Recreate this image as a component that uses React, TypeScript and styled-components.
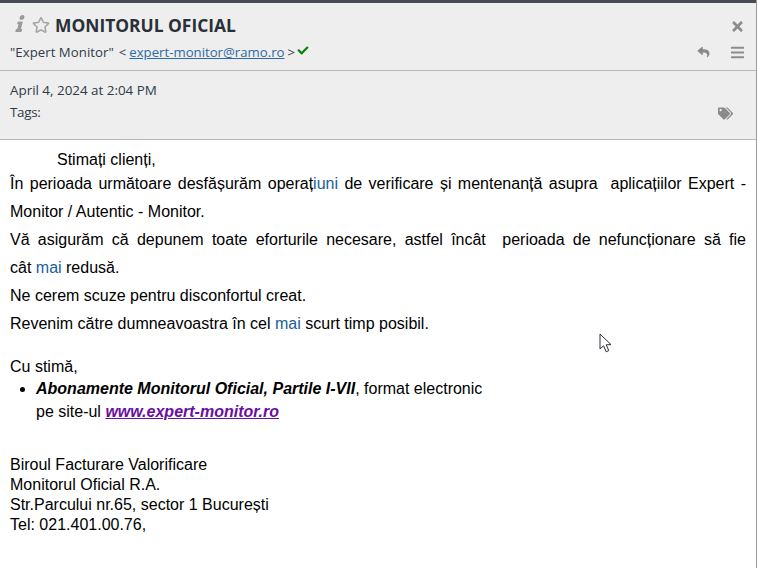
import styled, { createGlobalStyle } from 'styled-components'
import { FaCheck, FaInfo, FaRegStar, FaReply, FaTags, FaTimes, FaBars } from 'react-icons/fa'

const GlobalStyle = createGlobalStyle`
  html, body {
    margin: 0;
    padding: 0;
    background: #ffffff;
    overflow: hidden;
  }
`

function App() {
  return (
    <>
      <GlobalStyle />
      <Window>
        <TopStrip />
        <Header>
          <TitleRow>
            <InfoIcon />
            <StarIcon />
            <Title>MONITORUL OFICIAL</Title>
            <Spacer />
            <CloseIcon />
          </TitleRow>
          <SenderRow>
            <Sender>"Expert Monitor"</Sender>
            <OpenBracket>&lt;</OpenBracket>
            <SenderLink href="#">expert-monitor@ramo.ro</SenderLink>
            <CloseBracket>&gt;</CloseBracket>
            <CheckIcon />
            <Spacer />
            <ReplyIcon />
            <MenuIcon />
          </SenderRow>
        </Header>
        <Meta>
          <DateLine>April 4, 2024 at 2:04 PM</DateLine>
          <TagsRow>
            <TagsLabel>Tags:</TagsLabel>
            <TagIcon />
          </TagsRow>
        </Meta>
        <Body>
          <Greeting>Stimați clienți,</Greeting>
          <Para>
            În perioada următoare desfășurăm operaț<Blue>iuni</Blue> de verificare și mentenanță asupra&nbsp; aplicațiilor Expert - Monitor / Autentic - Monitor.
          </Para>
          <FullLine>Vă asigurăm că depunem toate eforturile necesare, astfel încât&nbsp; perioada de nefuncționare să fie</FullLine>
          <Para>
            cât <Blue>mai</Blue> redusă.
          </Para>
          <Para>Ne cerem scuze pentru disconfortul creat.</Para>
          <Para>
            Revenim către dumneavoastra în cel <Blue>mai</Blue> scurt timp posibil.
          </Para>
          <Closing>Cu stimă,</Closing>
          <Bullets>
            <li>
              <strong><em>Abonamente Monitorul Oficial, Partile I-VII</em></strong>, format electronic
              <br />
              pe site-ul <SiteLink href="#">www.expert-monitor.ro</SiteLink>
            </li>
          </Bullets>
          <Signature>
            <div>Biroul Facturare Valorificare</div>
            <div>Monitorul Oficial R.A.</div>
            <div>Str.Parcului nr.65, sector 1 București</div>
            <div>Tel: 021.401.00.76,</div>
          </Signature>
        </Body>
        <Cursor width="14" height="21" viewBox="0 0 14 21">
          <path d="M1 1 L1 16 L4.6 12.8 L7.2 18.8 L9.8 17.6 L7.2 11.8 L12 11.6 Z" fill="#ffffff" stroke="#2a2f38" strokeWidth="1" />
        </Cursor>
      </Window>
    </>
  )
}

const Window = styled.div`
  position: relative;
  width: 757px;
  height: 568px;
  box-sizing: border-box;
  border-right: 1px solid #9a9a9a;
  overflow: hidden;
  background: #fff;
`

const TopStrip = styled.div`
  height: 3px;
  background: #464b55;
`

const Header = styled.header`
  height: 68px;
  box-sizing: border-box;
  padding: 9px 11px 0 10px;
  background: #eeeeee;
  border-bottom: 1px solid #b8b8b8;
  font-family: "Open Sans", sans-serif;
`

const TitleRow = styled.div`
  display: flex;
  align-items: center;
  height: 27px;
`

const SenderRow = styled.div`
  display: flex;
  align-items: center;
  height: 22px;
  margin-top: 2px;
  font-size: 13.2px;
  color: #2f3b49;
`

const Spacer = styled.div`
  flex: 1;
`

const InfoIcon = styled(FaInfo)`
  width: 11px;
  height: 17px;
  margin-left: 5px;
  margin-top: -5px;
  color: #9b9b9b;
  transform: skewX(-14deg);
`

const StarIcon = styled(FaRegStar)`
  width: 18px;
  height: 18px;
  margin-left: 6px;
  margin-top: -2px;
  color: #a4a4a4;
`

const Title = styled.h1`
  margin: 0 0 0 5px;
  font-size: 17.4px;
  font-weight: 700;
  line-height: 27px;
  color: #2a3038;
`

const CloseIcon = styled(FaTimes)`
  width: 15px;
  height: 15px;
  color: #8c8c8c;
  margin-top: 2px;
`

const Sender = styled.span`
  letter-spacing: 0.05px;
`

const OpenBracket = styled.span`
  margin-left: 5px;
`

const CloseBracket = styled.span`
  margin-left: 3px;
`

const SenderLink = styled.a`
  color: #2f6aa3;
  text-decoration: underline;
  margin-left: 3px;
`

const CheckIcon = styled(FaCheck)`
  width: 12px;
  height: 11px;
  color: #0a7d0a;
  margin-left: 2px;
  margin-top: -3px;
`

const ReplyIcon = styled(FaReply)`
  width: 13px;
  height: 12px;
  color: #8a8a8a;
`

const MenuIcon = styled(FaBars)`
  width: 15px;
  height: 15px;
  color: #8c8c8c;
  margin-left: 20px;
`

const Meta = styled.div`
  height: 69px;
  box-sizing: border-box;
  padding: 9px 11px 0 10px;
  background: #eeeeee;
  border-bottom: 1px solid #b8b8b8;
  font-family: "Open Sans", sans-serif;
  font-size: 13.4px;
  color: #2f3b49;
`

const DateLine = styled.div`
  line-height: 20px;
`

const TagsRow = styled.div`
  display: flex;
  justify-content: space-between;
  align-items: center;
  line-height: 20px;
  margin-top: 2px;
  padding-right: 12px;
`

const TagsLabel = styled.span`
  letter-spacing: -0.3px;
`

const TagIcon = styled(FaTags)`
  width: 15px;
  height: 13px;
  color: #8a8a8a;
  margin-top: 3px;
`

const Body = styled.main`
  padding: 9px 10px 0;
  font-family: "Liberation Sans", Arial, sans-serif;
  font-size: 16px;
  color: #000000;
`

const Greeting = styled.div`
  padding-left: 47px;
  line-height: 21px;
`

const Para = styled.p`
  margin: 0;
  line-height: 28px;
  text-align: justify;
`

const FullLine = styled(Para)`
  text-align-last: justify;
`

const Blue = styled.span`
  color: #17609a;
`

const Closing = styled.div`
  margin-top: 18px;
  line-height: 21px;
`

const Bullets = styled.ul`
  margin: 0;
  padding-left: 26px;
  line-height: 23px;
`

const SiteLink = styled.a`
  color: #6a0fa0;
  font-weight: 700;
  font-style: italic;
  text-decoration: underline;
`

const Signature = styled.div`
  margin-top: 32px;
  line-height: 20px;
`

const Cursor = styled.svg`
  position: absolute;
  left: 599px;
  top: 333px;
`

export default App
